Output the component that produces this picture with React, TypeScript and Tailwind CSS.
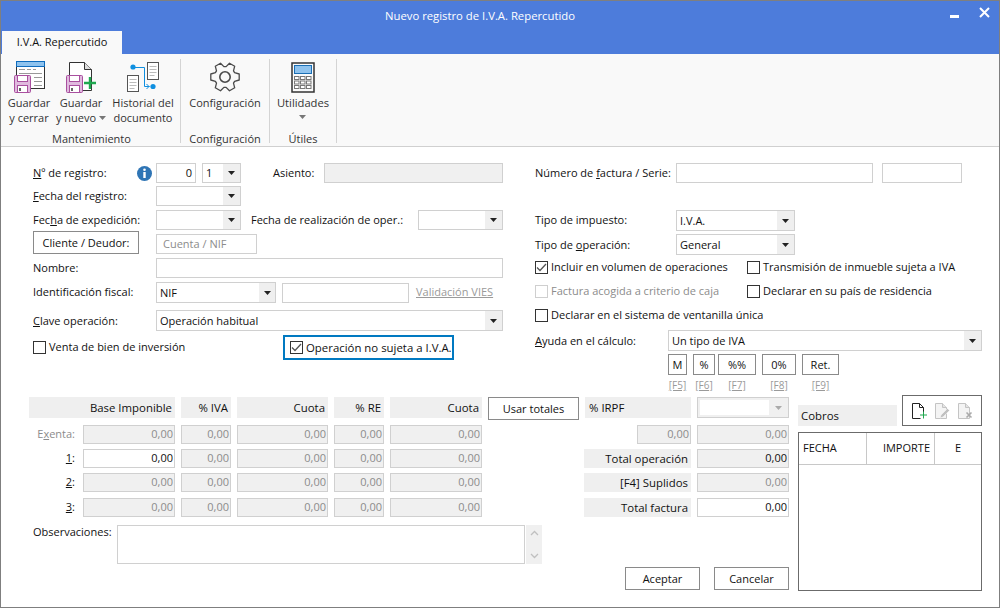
import type { ReactNode } from "react";

// gear outline with six teeth, one pointing left and one right
const gearPath = () => {
  const cx = 16;
  const cy = 16;
  const pts: string[] = [];
  for (let i = 0; i < 6; i++) {
    const a = (i * Math.PI) / 3;
    const at = (r: number, d: number) => {
      const t = a + (d * Math.PI) / 180;
      return `${(cx + r * Math.cos(t)).toFixed(1)} ${(cy + r * Math.sin(t)).toFixed(1)}`;
    };
    pts.push(at(10.5, -24), at(14.5, -12), at(14.5, 12), at(10.5, 24));
  }
  return `M${pts.join("L")}Z`;
};

function Floppy({ x = 3, y = 15 }: { x?: number; y?: number }) {
  return (
    <g transform={`translate(${x} ${y})`}>
      <rect x="0.5" y="0.5" width="16" height="17" rx="1" fill="#e0bade" stroke="#a9509f" />
      <rect x="3.5" y="0.5" width="10" height="6" fill="#fff" stroke="#a9509f" />
      <rect x="3.5" y="10.5" width="10" height="7" fill="#fff" stroke="#a9509f" />
      <rect x="5" y="13" width="2" height="3" fill="#666" />
    </g>
  );
}

function SaveCloseIcon() {
  return (
    <svg width="36" height="34" viewBox="0 0 36 34">
      <rect x="5.5" y="1.5" width="28" height="27" fill="#fff" stroke="#333" />
      <rect x="5.5" y="1.5" width="28" height="5" fill="#8fc3ee" stroke="#0f6cbd" />
      <path d="M8 9.5h6M16 9.5h4M22 9.5h3M8 13.5h23M23 17.5h8M23 21.5h8M23 25.5h8" stroke="#999" fill="none" />
      <Floppy />
    </svg>
  );
}

function SaveNewIcon() {
  return (
    <svg width="36" height="34" viewBox="0 0 36 34">
      <path d="M6.5 2.5h15l7 7v21h-22z" fill="#fff" stroke="#333" />
      <path d="M21.5 2.5v7h7" fill="#ddd" stroke="#333" />
      <Floppy />
      <path d="M27 17v12M21 23h12" stroke="#1fa84f" strokeWidth="2.4" fill="none" />
    </svg>
  );
}

function HistoryIcon() {
  return (
    <svg width="36" height="34" viewBox="0 0 36 34">
      <rect x="22.5" y="2.5" width="11" height="17" fill="#fff" stroke="#555" />
      <path d="M24.5 6.5h7M24.5 9.5h7M24.5 12.5h7M24.5 15.5h5" stroke="#bbb" />
      <rect x="2.5" y="15.5" width="11" height="16" fill="#fff" stroke="#555" />
      <path d="M4.5 19.5h7M4.5 22.5h7M4.5 25.5h7M4.5 28.5h5" stroke="#bbb" />
      <circle cx="8" cy="7" r="2.6" fill="#0f8fe0" />
      <circle cx="28" cy="26.5" r="2.6" fill="#0f8fe0" />
      <path d="M8 7.5h11.5v19h5M21.5 24l2.5 2.5-2.5 2.5" stroke="#0f8fe0" fill="none" />
    </svg>
  );
}

function GearIcon() {
  return (
    <svg width="32" height="32" viewBox="0 0 32 32">
      <path d={gearPath()} fill="none" stroke="#4a4a4a" strokeWidth="1.3" strokeLinejoin="round" />
      <circle cx="16" cy="16" r="5.2" fill="none" stroke="#4a4a4a" strokeWidth="1.6" />
    </svg>
  );
}

function CalcIcon() {
  const keys = [0, 1, 2].flatMap((r) => [0, 1, 2].map((c) => [c, r]));
  return (
    <svg width="24" height="31" viewBox="0 0 24 31">
      <rect x="1" y="1" width="22" height="29" fill="#fafafa" stroke="#333" strokeWidth="1.5" />
      <rect x="3.5" y="3.5" width="17" height="8" fill="#8fc3ee" stroke="#1a6fb5" />
      {keys.map(([c, r]) => (
        <rect key={`${c}${r}`} x={3.5 + c * 6} y={14.5 + r * 4.5} width="4.5" height="3" fill="#fff" stroke="#777" />
      ))}
    </svg>
  );
}

function InfoIcon() {
  return (
    <svg width="15" height="15" viewBox="0 0 15 15">
      <circle cx="7.5" cy="7.5" r="7.5" fill="#2f75b5" />
      <circle cx="7.5" cy="3.8" r="1.3" fill="#fff" />
      <rect x="6.3" y="6" width="2.4" height="6" fill="#fff" />
    </svg>
  );
}

function Arrow({ color = "#222" }: { color?: string }) {
  return (
    <svg width="7" height="4" viewBox="0 0 7 4">
      <path d="M0 0h7L3.5 4z" fill={color} />
    </svg>
  );
}

function DocNew() {
  return (
    <svg width="16" height="16" viewBox="0 0 16 16">
      <path d="M.5 15.5V.5h7l4 4v5M7.5.5v4h4M.5 15.5h8" fill="none" stroke="#222" />
      <path d="M11.5 8.5v7M8 12h7" stroke="#1fa84f" fill="none" />
    </svg>
  );
}

function DocEdit() {
  return (
    <svg width="16" height="16" viewBox="0 0 16 16">
      <path d="M.5.5h7l4 4v11H.5z" fill="#f4f4f4" stroke="#c4c4c4" />
      <path d="M7.5.5v4h4" fill="#e4e4e4" stroke="#c4c4c4" />
      <path d="M5 15l1-3 6.5-6.5 2 2L8 14z" fill="#c0c0c0" stroke="#fff" strokeWidth=".5" />
    </svg>
  );
}

function DocDelete() {
  return (
    <svg width="16" height="16" viewBox="0 0 16 16">
      <path d="M.5.5h7l4 4v11H.5z" fill="#f4f4f4" stroke="#c4c4c4" />
      <path d="M7.5.5v4h4" fill="#e4e4e4" stroke="#c4c4c4" />
      <path d="M8.5 9.5l5 5M13.5 9.5l-5 5" stroke="#aaa" strokeWidth="1.6" />
    </svg>
  );
}

function Input({ w, h = "h-[20px]", value, tone = "white", className = "" }: { w: string; h?: string; value?: string; tone?: "white" | "off" | "strong"; className?: string }) {
  const tones = {
    white: "bg-white text-[#111]",
    off: "bg-[#f0f0f0] text-[#8c8c8c]",
    strong: "bg-[#f0f0f0] text-[#111]",
  };
  return <div className={`${w} ${h} ${tones[tone]} ${className} shrink-0 border border-[#d0d0d0] flex items-center justify-end pr-[1px]`}>{value}</div>;
}

function Select({ w, value, h = "h-[21px]", arrow = "w-[17px]" }: { w: string; value?: string; h?: string; arrow?: string }) {
  return (
    <div className={`${w} ${h} shrink-0 border border-[#d0d0d0] bg-white flex text-[#111]`}>
      <div className="flex-1 pl-[3px] pt-[1px] flex items-center">{value}</div>
      <div className={`${arrow} bg-[#efefef] flex items-center justify-center`}>
        <Arrow />
      </div>
    </div>
  );
}

function Check({ checked, disabled, label }: { checked?: boolean; disabled?: boolean; label: string }) {
  return (
    <div className={`flex items-center gap-[3px] ${disabled ? "text-[#8c8c8c]" : "text-[#111]"}`}>
      <div className={`w-[13px] h-[13px] shrink-0 border ${disabled ? "border-[#cfcfcf]" : "border-[#333]"} flex items-center justify-center`}>
        {checked && (
          <svg width="11" height="9" viewBox="0 0 11 9">
            <path d="M1 4.5l3 3 6-6.5" fill="none" stroke="#555" strokeWidth="1.3" />
          </svg>
        )}
      </div>
      <span>{label}</span>
    </div>
  );
}

function Btn({ w, h, children }: { w: string; h: string; children: ReactNode }) {
  return <button className={`${w} ${h} shrink-0 border border-[#8a8a8a] bg-white text-[#111] pt-[1px] flex items-center justify-center`}>{children}</button>;
}

function Head({ w, h = "h-[21px] pt-[1px] text-[11.4px]", children, right = true }: { w: string; h?: string; children: ReactNode; right?: boolean }) {
  return <div className={`${w} ${h} shrink-0 bg-[#efefef] text-[#111] flex items-center ${right ? "justify-end pr-[3px]" : "pl-[4px]"}`}>{children}</div>;
}

function RibbonButton({ w, icon, children }: { w: string; icon: ReactNode; children: ReactNode }) {
  return (
    <div className={`${w} shrink-0 flex flex-col items-center`}>
      <div className="h-[36px] flex items-center justify-center">{icon}</div>
      <div className="text-center leading-[15px] text-[#333] whitespace-nowrap">{children}</div>
    </div>
  );
}

function RibbonGroup({ w, label, children }: { w: string; label: string; children: ReactNode }) {
  return (
    <div className={`${w} shrink-0 h-[84px] border-r border-[#d4d4d4] flex flex-col mt-[5px]`}>
      <div className="flex-1 flex">{children}</div>
      <div className="text-center leading-[15px] text-[#333] mb-[-3px]">{label}</div>
    </div>
  );
}

function AmountRow({ label, first = "off", labelClass = "text-[#111]", mt, h = "h-[19px]", right }: { label: ReactNode; first?: "off" | "white"; labelClass?: string; mt: string; h?: string; right: ReactNode }) {
  return (
    <div className={`flex ${mt}`}>
      <div className={`w-[46px] ${h} flex items-center justify-end ${labelClass}`}>{label}</div>
      <div className="w-[8px]" />
      <div className="flex gap-[6px]">
        <Input w="w-[92px]" h={h} value="0,00" tone={first} />
        <Input w="w-[50px]" h={h} value="0,00" tone="off" />
        <Input w="w-[91px]" h={h} value="0,00" tone="off" />
        <Input w="w-[50px]" h={h} value="0,00" tone="off" />
        <Input w="w-[92px]" h={h} value="0,00" tone="off" />
      </div>
      <div className="ml-auto flex gap-[6px]">{right}</div>
    </div>
  );
}

const quickKeys = [
  { w: "w-[19px]", mr: "mr-[6px]", label: "M", key: "[F5]" },
  { w: "w-[22px]", mr: "mr-[3px]", label: "%", key: "[F6]" },
  { w: "w-[38px]", mr: "mr-[6px]", label: "%%", key: "[F7]" },
  { w: "w-[34px]", mr: "mr-[6px]", label: "0%", key: "[F8]" },
  { w: "w-[37px]", mr: "", label: "Ret.", key: "[F9]" },
];

export default function App() {
  return (
    <div className="w-[1000px] h-[608px] overflow-hidden border border-[#7f7f7f] bg-white text-[11px] text-[#111] font-['Open_Sans',sans-serif] flex flex-col box-border">
      {/* title bar */}
      <div className="h-[53px] shrink-0 bg-[#4d7cdb] flex flex-col">
        <div className="h-[30px] relative flex items-center justify-center pr-[40px] text-white text-[11.3px]">
          Nuevo registro de I.V.A. Repercutido
          <div className="absolute left-[949px] top-[14px] w-[9px] h-[3px] bg-white" />
          <svg className="absolute left-[978px] top-[6px]" width="11" height="11" viewBox="0 0 11 11">
            <path d="M1 1l9 9M10 1l-9 9" stroke="#fff" strokeWidth="2" />
          </svg>
        </div>
        <div className="flex-1 flex items-end pl-[1px]">
          <div className="w-[120px] h-[23px] bg-[#f9f9f9] flex items-center justify-center text-[#111]">I.V.A. Repercutido</div>
        </div>
      </div>

      {/* ribbon */}
      <div className="h-[93px] shrink-0 bg-[#f9f9f9] border-b border-[#d0d0d0] flex pl-[2px]">
        <RibbonGroup w="w-[178px]" label="Mantenimiento">
          <RibbonButton w="w-[52px]" icon={<SaveCloseIcon />}>
            Guardar
            <br />y cerrar
          </RibbonButton>
          <RibbonButton w="w-[52px]" icon={<SaveNewIcon />}>
            Guardar
            <br />
            <span className="inline-flex items-center gap-[3px]">
              y nuevo <Arrow color="#777" />
            </span>
          </RibbonButton>
          <div className="w-[5px]" />
          <RibbonButton w="w-[62px]" icon={<HistoryIcon />}>
            Historial del
            <br />
            documento
          </RibbonButton>
        </RibbonGroup>
        <RibbonGroup w="w-[89px]" label="Configuración">
          <RibbonButton w="w-[88px]" icon={<GearIcon />}>
            Configuración
          </RibbonButton>
        </RibbonGroup>
        <RibbonGroup w="w-[67px]" label="Útiles">
          <RibbonButton w="w-[66px]" icon={<CalcIcon />}>
            <span className="text-[11.2px]">Utilidades</span>
            <div className="flex justify-center mt-[5px]">
              <Arrow color="#777" />
            </div>
          </RibbonButton>
        </RibbonGroup>
      </div>

      {/* upper form */}
      <div className="h-[250px] shrink-0 pt-[16px] pl-[32px] flex">
        <div className="w-[470px] shrink-0 flex flex-col">
          <div className="flex items-center h-[20px]">
            <div className="w-[104px] shrink-0">
              <u>N</u>º de registro:
            </div>
            <InfoIcon />
            <div className="w-[4px]" />
            <Input w="w-[40px]" value="0" className="pr-[3px]" />
            <div className="w-[6px]" />
            <Select w="w-[39px]" h="h-[20px]" value="1" />
            <div className="w-[32px]" />
            <div className="w-[51px] shrink-0">Asiento:</div>
            <Input w="w-[179px]" tone="off" />
          </div>
          <div className="flex items-center h-[20px] mt-[3px]">
            <div className="w-[123px] shrink-0">
              <u>F</u>echa del registro:
            </div>
            <Select w="w-[85px]" h="h-[20px]" />
          </div>
          <div className="flex items-center h-[20px] mt-[4px]">
            <div className="w-[123px] shrink-0">
              Fec<u>h</u>a de expedición:
            </div>
            <Select w="w-[85px]" h="h-[20px]" />
            <div className="w-[10px]" />
            <div className="w-[167px] shrink-0 whitespace-nowrap">Fecha de realización de oper.:</div>
            <Select w="w-[85px]" h="h-[20px]" />
          </div>
          <div className="flex items-end h-[20px] mt-[4px]">
            <Btn w="w-[106px]" h="h-[23px]">
              Cliente / Deudor:
            </Btn>
            <div className="w-[17px]" />
            <div className="w-[101px] h-[20px] border border-[#d0d0d0] pl-[6px] flex items-center text-[#8c8c8c]">Cuenta / NIF</div>
          </div>
          <div className="flex items-center h-[20px] mt-[4px]">
            <div className="w-[123px] shrink-0">Nombre:</div>
            <Input w="w-[347px]" />
          </div>
          <div className="flex items-center h-[21px] mt-[4px]">
            <div className="w-[123px] shrink-0">Identificación fiscal:</div>
            <Select w="w-[120px]" value="NIF" arrow="w-[16px]" />
            <div className="w-[6px]" />
            <Input w="w-[127px]" />
            <div className="w-[7px]" />
            <span className="text-[#9a9a9a] underline whitespace-nowrap">Validación VIES</span>
          </div>
          <div className="flex items-center h-[21px] mt-[7px]">
            <div className="w-[123px] shrink-0 pt-[1px]">
              <u>C</u>lave operación:
            </div>
            <Select w="w-[347px]" value="Operación habitual" />
          </div>
          <div className="flex items-center h-[25px] mt-[4px]">
            <div className="w-[250px] shrink-0">
              <Check label="Venta de bien de inversión" />
            </div>
            <div className="w-[171px] h-[25px] border-2 border-[#0079c1] pl-[5px] flex items-center whitespace-nowrap text-[11.4px]">
              <Check checked label="Operación no sujeta a I.V.A." />
            </div>
          </div>
        </div>

        <div className="ml-[32px] w-[447px] shrink-0 flex flex-col">
          <div className="flex items-center h-[20px]">
            <div className="w-[141px] shrink-0 whitespace-nowrap">
              Número de <u>f</u>actura / Serie:
            </div>
            <Input w="w-[197px]" />
            <div className="w-[9px]" />
            <Input w="w-[80px]" />
          </div>
          <div className="flex items-center h-[21px] mt-[27px]">
            <div className="w-[141px] shrink-0">Tipo de impuesto:</div>
            <Select w="w-[119px]" value="I.V.A." />
          </div>
          <div className="flex items-center h-[21px] mt-[3px]">
            <div className="w-[141px] shrink-0 pt-[1px]">
              Tipo de <u>o</u>peración:
            </div>
            <Select w="w-[119px]" value="General" />
          </div>
          <div className="flex h-[14px] items-center mt-[5px] whitespace-nowrap">
            <div className="w-[212px] shrink-0">
              <Check checked label="Incluir en volumen de operaciones" />
            </div>
            <Check label="Transmisión de inmueble sujeta a IVA" />
          </div>
          <div className="flex h-[14px] items-center mt-[10px] whitespace-nowrap">
            <div className="w-[212px] shrink-0">
              <Check disabled label="Factura acogida a criterio de caja" />
            </div>
            <Check label="Declarar en su país de residencia" />
          </div>
          <div className="flex h-[14px] items-center mt-[10px] whitespace-nowrap">
            <Check label="Declarar en el sistema de ventanilla única" />
          </div>
          <div className="flex items-center h-[21px] mt-[8px]">
            <div className="w-[133px] shrink-0 pt-[1px]">
              <u>A</u>yuda en el cálculo:
            </div>
            <Select w="w-[314px]" value="Un tipo de IVA" />
          </div>
          <div className="flex mt-[3px] ml-[133px]">
            {quickKeys.map((k) => (
              <div key={k.key} className={`${k.w} ${k.mr} flex flex-col items-center`}>
                <Btn w="w-full" h="h-[21px]">
                  {k.label}
                </Btn>
                <span className="text-[10px] leading-[12px] mt-[4px] text-[#9a9a9a] underline">{k.key}</span>
              </div>
            ))}
          </div>
        </div>
      </div>

      {/* amounts and cobros */}
      <div className="flex pl-[28px]">
        <div className="w-[760px] shrink-0 flex flex-col">
          <div className="flex gap-[6px]">
            <Head w="w-[146px]">Base Imponible</Head>
            <Head w="w-[50px]">% IVA</Head>
            <Head w="w-[91px]">Cuota</Head>
            <Head w="w-[50px]">% RE</Head>
            <Head w="w-[92px]">Cuota</Head>
            <Btn w="w-[91px]" h="h-[23px]">
              Usar totales
            </Btn>
            <Head w="w-[106px]" right={false}>
              % IRPF
            </Head>
            <div className="w-[92px] h-[21px] border border-[#d0d0d0] bg-[#f0f0f0] flex items-center pl-[2px]">
              <div className="w-[69px] h-[15px] bg-white" />
              <div className="flex-1 flex justify-center">
                <Arrow color="#aaa" />
              </div>
            </div>
          </div>
          <AmountRow
            mt="mt-[5px]"
            label={
              <>
                E<u>x</u>enta:
              </>
            }
            labelClass="text-[#8c8c8c]"
            right={
              <>
                <Input w="w-[54px]" h="h-[19px]" value="0,00" tone="off" />
                <Input w="w-[92px]" h="h-[19px]" value="0,00" tone="off" />
              </>
            }
          />
          <AmountRow
            mt="mt-[5px]"
            first="white"
            label={
              <>
                <u>1</u>:
              </>
            }
            right={
              <>
                <Head w="w-[107px]" h="h-[19px] text-[11.4px]">Total operación</Head>
                <Input w="w-[92px]" h="h-[19px]" value="0,00" tone="strong" />
              </>
            }
          />
          <AmountRow
            mt="mt-[5px]"
            label={
              <>
                <u>2</u>:
              </>
            }
            right={
              <>
                <Head w="w-[107px]" h="h-[19px] text-[11.4px]">[F4] Suplidos</Head>
                <Input w="w-[92px]" h="h-[19px]" value="0,00" tone="off" />
              </>
            }
          />
          <AmountRow
            mt="mt-[6px]"
            label={
              <>
                <u>3</u>:
              </>
            }
            right={
              <>
                <Head w="w-[107px]" h="h-[19px] text-[11.4px]">Total factura</Head>
                <Input w="w-[92px]" h="h-[19px]" value="0,00" />
              </>
            }
          />
          <div className="flex mt-[8px] pl-[4px]">
            <div className="w-[84px] shrink-0 leading-[14px]">Observaciones:</div>
            <div className="w-[408px] h-[39px] border border-[#d0d0d0]" />
            <div className="w-[16px] h-[39px] ml-[1px] bg-[#f0f0f0] flex flex-col items-center justify-between py-[5px]">
              <svg width="9" height="6" viewBox="0 0 9 6">
                <path d="M1 5l3.5-3.5L8 5" fill="none" stroke="#c0c0c0" strokeWidth="1.3" />
              </svg>
              <svg width="9" height="6" viewBox="0 0 9 6">
                <path d="M1 1l3.5 3.5L8 1" fill="none" stroke="#c0c0c0" strokeWidth="1.3" />
              </svg>
            </div>
          </div>
          <div className="flex justify-end gap-[14px] mt-[3px]">
            <Btn w="w-[75px]" h="h-[23px]">
              Aceptar
            </Btn>
            <Btn w="w-[75px]" h="h-[23px]">
              Cancelar
            </Btn>
          </div>
        </div>

        <div className="ml-[9px] w-[184px] shrink-0 -mt-[2px] flex flex-col">
          <div className="flex items-end gap-[5px]">
            <div className="w-[99px] h-[21px] bg-[#efefef] pl-[3px] pt-[1px] flex items-center text-[#111] text-[11.4px]">Cobros</div>
            <div className="w-[80px] h-[31px] border border-[#6b6b6b] flex items-center pl-[9px] gap-[7px]">
              <DocNew />
              <DocEdit />
              <DocDelete />
            </div>
          </div>
          <div className="h-[159px] mt-[6px] border border-[#6b6b6b] flex flex-col">
            <div className="h-[32px] border-b border-[#c8c8c8] flex text-[#111]">
              <div className="w-[68px] border-r border-[#c8c8c8] pl-[4px] flex items-center">FECHA</div>
              <div className="w-[68px] border-r border-[#c8c8c8] pr-[4px] flex items-center justify-end">IMPORTE</div>
              <div className="flex-1 flex items-center justify-center">E</div>
            </div>
          </div>
        </div>
      </div>
    </div>
  );
}
